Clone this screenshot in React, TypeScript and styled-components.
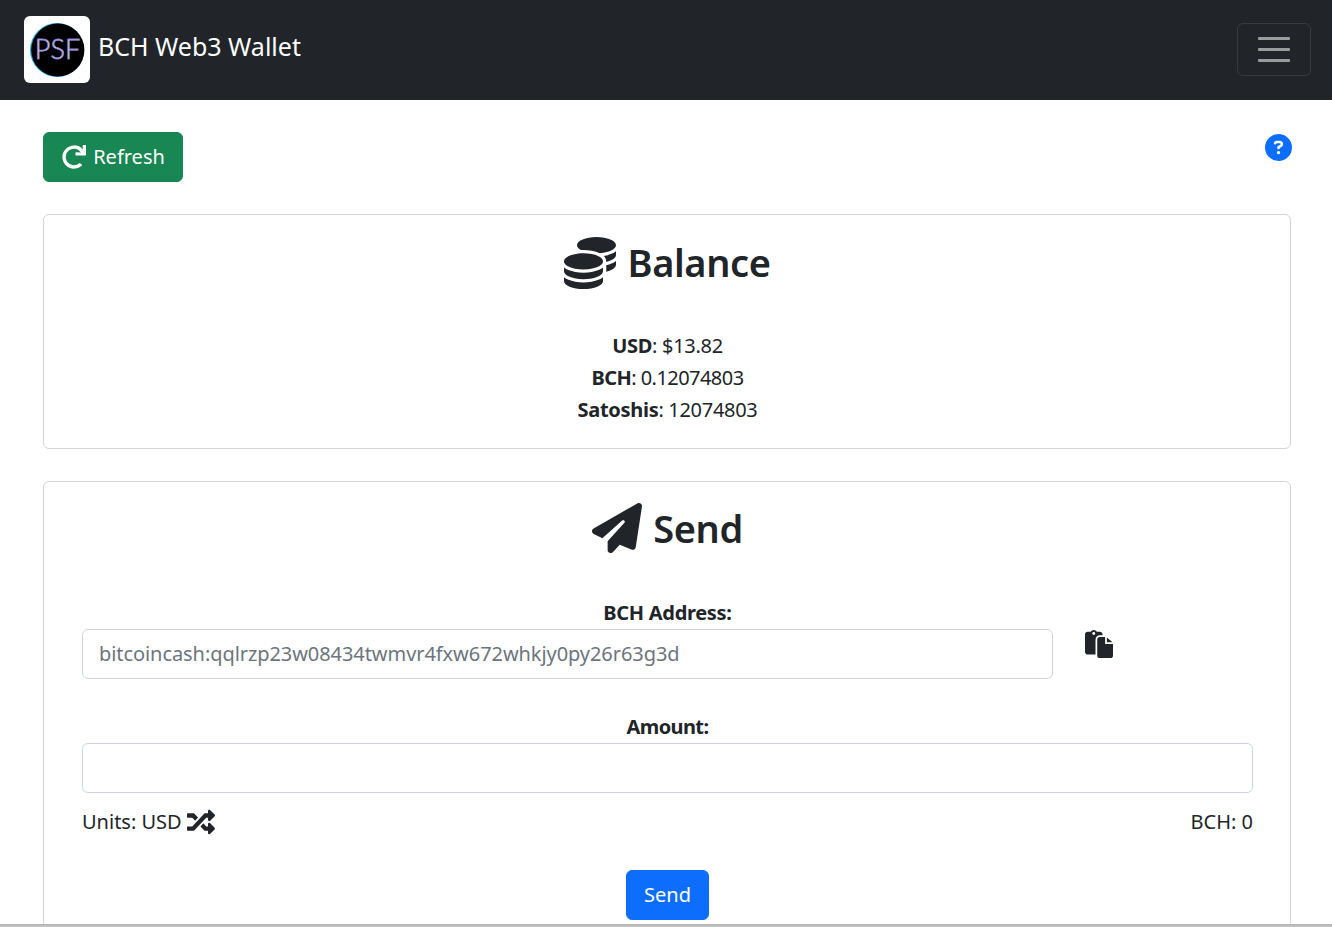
import React from "react";
import styled, { createGlobalStyle } from "styled-components";
import { FaCoins, FaPaperPlane, FaCircleQuestion } from "react-icons/fa6";
import { FaRedo, FaRandom } from "react-icons/fa";

const Global = createGlobalStyle`
  html, body { margin: 0; padding: 0; height: 927px; overflow: hidden; background: #fff; }
  body { font-family: "Noto Sans", "Liberation Sans", sans-serif; font-size: 20px; line-height: 32px; color: #212529; }
  * { box-sizing: border-box; }
`;
const Page = styled.div`position: relative; height: 927px; overflow: hidden;`;
const Navbar = styled.header`
  height: 100px; background: #212529; display: flex; align-items: flex-start; justify-content: space-between;
  padding: 16px 21px 0 24px;
`;
const Brand = styled.div`display: flex; align-items: center; gap: 8px; color: #fff; font-size: 25px;`;
const LogoBox = styled.div`width: 66px; height: 67px; background: #fff; border-radius: 6px; display: flex; align-items: center; justify-content: center;`;
const BrandName = styled.span`position: relative; top: -4px;`;
const Toggler = styled.button`
  width: 74px; height: 53px; margin-top: 7px; background: transparent; border: 1px solid rgba(255,255,255,.1); border-radius: 6px;
  display: flex; flex-direction: column; align-items: center; justify-content: center; gap: 8.5px; padding: 0;
`;
const TogglerBar = styled.span`width: 32px; height: 2.5px; border-radius: 1px; background: rgba(255,255,255,.55);`;
const Content = styled.main`padding: 32px 41px 0 43px;`;
const TopRow = styled.div`display: flex; justify-content: space-between; align-items: flex-start; margin-bottom: 32px;`;
const RefreshButton = styled.button`
  display: flex; align-items: center; justify-content: center; gap: 7px; width: 140px; height: 50px;
  background: #198754; color: #fff; border: 1px solid #198754; border-radius: 6px; font: inherit; padding: 0 0 0 1px;
`;
const Help = styled.span`display: block; color: #0d6efd; font-size: 27px; line-height: 27px; height: 27px; margin: 2px -1px 0 0; svg { display: block; }`;
const Card = styled.section`border: 1px solid #d3d4d5; border-radius: 6px; margin-bottom: 32px; padding: 0 37px 0 38px;`;
const BalanceCard = styled(Card)`height: 235px;`;
const SendCard = styled(Card)`height: 470px;`;
const Title = styled.h2<{ $top: number }>`
  display: flex; align-items: center; justify-content: center; gap: 11px; margin: ${p => p.$top}px 0 0;
  font-size: 38px; line-height: 48px; font-weight: 600; letter-spacing: -.4px;
`;
const TitleText = styled.span`position: relative; top: -1px;`;
const Stats = styled.div`margin-top: 41px; text-align: center;`;
const Stat = styled.div<{ $spacing: number }>`height: 32px; line-height: 32px; letter-spacing: ${p => p.$spacing}px;`;
const Label = styled.label<{ $spacing?: number }>`display: block; text-align: center; font-weight: 700; line-height: 32px; height: 32px; letter-spacing: ${p => p.$spacing ?? -0.3}px;`;
const AddressRow = styled.div`display: flex; align-items: flex-start;`;
const Input = styled.input`
  display: block; width: 100%; height: 50px; padding: 0 16px 2px; font: inherit; color: #212529; border: 1px solid #ced4da; border-radius: 6px; background: #fff; outline: none; letter-spacing: -.07px;
  &::placeholder { color: #6c757d; opacity: 1; }
`;
const AddressCol = styled.div`width: 971px;`;
const PasteIcon = styled.svg`display: block; width: 28px; height: 28px; margin: 1px 0 0 32px; fill: currentColor;`;
const AddressLabel = styled(Label)`margin-top: 44px;`;
const AmountLabel = styled(Label)`margin-top: 32px;`;
const UnitsRow = styled.div`display: flex; justify-content: space-between; align-items: center; margin-top: 13px; height: 32px;`;
const Units = styled.span`display: flex; align-items: center; gap: 5px; svg { display: block; }`;
const SendRow = styled.div`display: flex; justify-content: center; margin-top: 32px;`;
const SendButton = styled.button`
  width: 83px; height: 50px; background: #0d6efd; color: #fff; border: 1px solid #0d6efd; border-radius: 6px; font: inherit; padding: 0;
`;
const BottomEdge = styled.div`position: absolute; left: 0; right: 0; bottom: 0; height: 3px; background: linear-gradient(#b4b4b4, #c4c4c4);`;

const Logo = () => (
  <svg width="56" height="56" viewBox="0 0 56 56" aria-label="PSF logo">
    <circle cx="28" cy="28" r="27" fill="#29a8e0" />
    <circle cx="28.8" cy="28" r="26.6" fill="#000" />
    <text x="28.5" y="37" textAnchor="middle" fontFamily="Lato, sans-serif" fontSize="27" fontWeight="300" fill="#fff" stroke="#8a7fd0" strokeWidth=".8">PSF</text>
  </svg>
);

const Paste = () => (
  <PasteIcon viewBox="0 0 512 512" aria-label="Paste">
    <path d="M160 0c-23.7 0-44.4 12.9-55.4 32H48C21.5 32 0 53.5 0 80V400c0 26.5 21.5 48 48 48H192V176c0-44.2 35.8-80 80-80h48V80c0-26.5-21.5-48-48-48H215.4C204.4 12.9 183.7 0 160 0z" />
    <circle cx="160" cy="64" r="26" fill="#fff" />
    <path d="M272 128H368V256H512V464a48 48 0 0 1-48 48H272a48 48 0 0 1-48-48V176a48 48 0 0 1 48-48z" />
    <path d="M400 136L504 224H400z" />
  </PasteIcon>
);

export default function App() {
  return (
    <Page>
      <Global />
      <Navbar>
        <Brand>
          <LogoBox><Logo /></LogoBox>
          <BrandName>BCH Web3 Wallet</BrandName>
        </Brand>
        <Toggler aria-label="Toggle navigation"><TogglerBar /><TogglerBar /><TogglerBar /></Toggler>
      </Navbar>
      <Content>
        <TopRow>
          <RefreshButton><FaRedo size={24} /> Refresh</RefreshButton>
          <Help><FaCircleQuestion /></Help>
        </TopRow>
        <BalanceCard>
          <Title $top={22}><FaCoins size={52} /> <TitleText>Balance</TitleText></Title>
          <Stats>
            <Stat $spacing={-0.3}><b>USD</b>: $13.82</Stat>
            <Stat $spacing={-0.55}><b>BCH</b>: 0.12074803</Stat>
            <Stat $spacing={-0.3}><b>Satoshis</b>: 12074803</Stat>
          </Stats>
        </BalanceCard>
        <SendCard>
          <Title $top={21}><FaPaperPlane size={50} /> <span>Send</span></Title>
          <AddressLabel>BCH Address:</AddressLabel>
          <AddressRow>
            <AddressCol><Input placeholder="bitcoincash:qqlrzp23w08434twmvr4fxw672whkjy0py26r63g3d" /></AddressCol>
            <Paste />
          </AddressRow>
          <AmountLabel $spacing={-0.6}>Amount:</AmountLabel>
          <Input />
          <UnitsRow>
            <Units>Units: USD <FaRandom size={28} /></Units>
            <span>BCH: 0</span>
          </UnitsRow>
          <SendRow><SendButton>Send</SendButton></SendRow>
        </SendCard>
      </Content>
      <BottomEdge />
    </Page>
  );
}
